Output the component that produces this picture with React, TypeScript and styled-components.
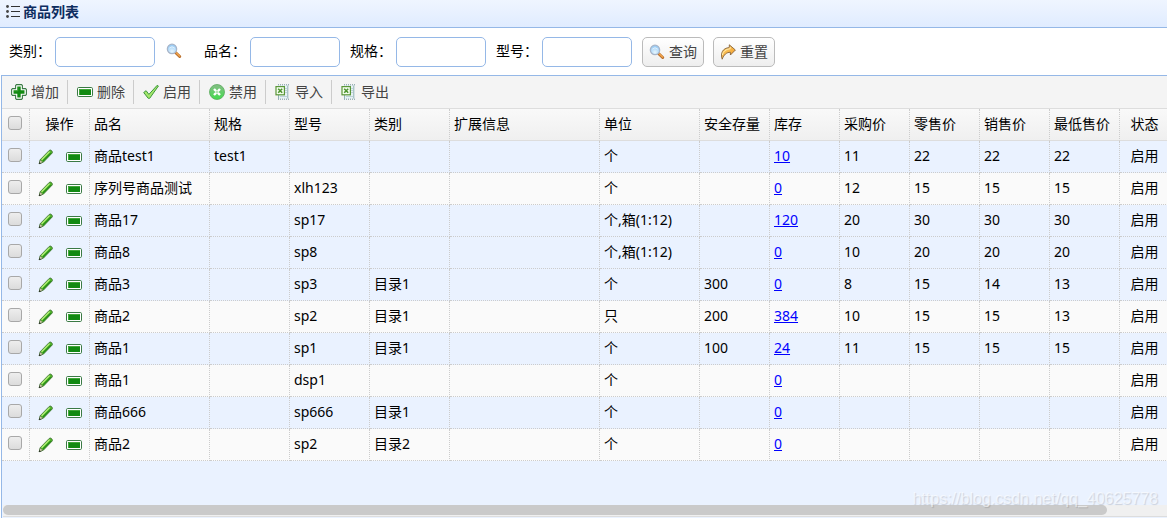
import React from 'react';
import styled, { createGlobalStyle } from 'styled-components';

const GlobalStyle = createGlobalStyle`
  * { box-sizing: border-box; }
  body {
    margin: 0;
    background: #fff;
    color: #000;
    font: 14px/20px "Noto Sans", "Noto Sans CJK SC", sans-serif;
  }
  input, button { font: inherit; }
`;

const Page = styled.div`
  position: relative;
  display: flex;
  flex-direction: column;
  min-height: 100vh;
`;

const TitleBar = styled.header`
  display: flex;
  align-items: center;
  height: 28px;
  padding: 0 5px 4px;
  gap: 2px;
  border-bottom: 1px solid #95b8e7;
  background: linear-gradient(#eff5ff, #e0ecff);
`;

const Title = styled.h1`
  margin: 0;
  color: #0e2d5f;
  font-size: 14px;
  line-height: 20px;
  font-weight: 700;
`;

const SearchForm = styled.form`
  display: flex;
  align-items: center;
  height: 47px;
  padding: 0 9px;
`;

const Field = styled.div<{ $gap?: number }>`
  display: flex;
  align-items: center;
  flex: none;
  margin-right: ${p => p.$gap ?? 10}px;
`;

const Label = styled.label`
  width: 46px;
  padding-bottom: 2px;
  white-space: nowrap;
`;

const TextBox = styled.input<{ $width: number }>`
  width: ${p => p.$width}px;
  height: 30px;
  padding: 4px;
  border: 1px solid #95b8e7;
  border-radius: 5px;
  background: #fff;
  outline: none;
`;

const LookupButton = styled.button`
  display: flex;
  margin-left: 11px;
  padding: 0 0 2px;
  border: 0;
  background: none;
`;

const FormButton = styled.button`
  display: flex;
  align-items: center;
  gap: 4px;
  flex: none;
  height: 30px;
  margin-right: 9px;
  padding: 0 6px;
  border: 1px solid #bbb;
  border-radius: 5px;
  background: linear-gradient(#fff, #eee);
  color: #444;
`;

const Grid = styled.section`
  display: flex;
  flex: 1;
  flex-direction: column;
  margin-left: 1px;
  overflow: hidden;
  border: solid #95b8e7;
  border-width: 1px 0 0 1px;
  background: #eaf2ff;
`;

const Toolbar = styled.div`
  display: flex;
  align-items: center;
  height: 33px;
  border-bottom: 1px solid #ddd;
  background: #f4f4f4;
`;

const ToolButton = styled.button`
  display: flex;
  align-items: center;
  gap: 4px;
  height: 24px;
  width: 65px;
  padding: 0 0 0 9px;
  border: 0;
  background: none;
  color: #444;
  white-space: nowrap;
`;

const Separator = styled.span`
  width: 1px;
  height: 24px;
  background: #ccc;
`;

const TableArea = styled.div`
  flex: 1;
  overflow: hidden;
`;

const Table = styled.table`
  width: 1168px;
  min-width: 100%;
  table-layout: fixed;
  border-collapse: separate;
  border-spacing: 0;
`;

const HeadRow = styled.tr`
  background: linear-gradient(#f9f9f9, #efefef);
`;

const HeadCell = styled.th<{ $center?: boolean }>`
  height: 32px;
  padding: 0 4px 2px;
  border-right: 1px dotted #ccc;
  border-bottom: 1px solid #ddd;
  font-weight: 400;
  text-align: ${p => (p.$center ? 'center' : 'left')};
  white-space: nowrap;
`;

const Row = styled.tr<{ $plain: boolean }>`
  background: ${p => (p.$plain ? '#fafafa' : '#eaf2ff')};
`;

const Cell = styled.td<{ $center?: boolean }>`
  height: 32px;
  padding: 0 4px 2px;
  border-right: 1px dotted #ccc;
  border-bottom: 1px dotted #ccc;
  text-align: ${p => (p.$center ? 'center' : 'left')};
  white-space: nowrap;
`;

const Tick = styled.input`
  appearance: none;
  display: block;
  width: 14px;
  height: 14px;
  margin: 0 0 2px 2px;
  border: 1px solid #a8a8a8;
  border-radius: 3px;
  background: linear-gradient(#eee, #dcdcdc);
`;

const RowActions = styled.div`
  display: flex;
  gap: 12px;
  padding: 2px 0 0 4px;
`;

const IconButton = styled.button`
  display: flex;
  padding: 0;
  border: 0;
  background: none;
`;

const StockLink = styled.a`
  color: #00f;
  text-decoration: underline;
`;

const ScrollTrack = styled.div`
  height: 12px;
  margin-left: 1px;
  margin-bottom: 1px;
  border-bottom: 1px solid #ddd;
  background: #f0f0f0;
`;

const ScrollThumb = styled.div`
  width: calc(95% - 2px);
  height: 10px;
  border-radius: 5px;
  background: #cacaca;
`;

const Watermark = styled.div`
  position: absolute;
  right: 9px;
  bottom: 9px;
  color: rgba(255, 255, 255, 0.6);
  font: 16px/20px "Liberation Sans", sans-serif;
  text-shadow: 1px 1px 1px rgba(0, 0, 0, 0.14);
  pointer-events: none;
`;

const icon = { width: 16, height: 16, viewBox: '0 0 16 16', 'aria-hidden': true };

const ListIcon = () => (
  <svg {...icon}>
    <g fill="#444">
      <circle cx="2.5" cy="2.5" r="1.4" />
      <circle cx="2.5" cy="7.5" r="1.4" />
      <circle cx="2.5" cy="12.5" r="1.4" />
    </g>
    <path d="M6 2.5h9M6 7.5h9M6 12.5h9" stroke="#333" />
  </svg>
);

const SearchIcon = () => (
  <svg {...icon}>
    <defs>
      <radialGradient id="lens" cx=".5" cy=".75" r=".7">
        <stop offset="0" stopColor="#e6f6ff" />
        <stop offset="1" stopColor="#92c8f4" />
      </radialGradient>
    </defs>
    <path d="M9.5 9.5l4.2 4" stroke="#b96f2c" strokeWidth="3" strokeLinecap="round" />
    <path d="M10.5 10l3 2.9" stroke="#f3a64c" strokeWidth="1.4" strokeLinecap="round" />
    <circle cx="6" cy="5.9" r="4.7" fill="url(#lens)" stroke="#a9b5c8" strokeWidth="1.2" />
    <path d="M3.2 5.2Q6 2.2 8.8 5.2" fill="none" stroke="#fff" strokeOpacity=".6" />
  </svg>
);

const ResetIcon = () => (
  <svg {...icon}>
    <defs>
      <linearGradient id="arrow" x1="0" y1="0" x2="1" y2="1">
        <stop offset="0" stopColor="#ffd873" />
        <stop offset="1" stopColor="#f0931d" />
      </linearGradient>
    </defs>
    <path
      d="M9.3.8L15.4 6l-5 5V8.3C6.5 8.3 4 10.5 2.2 15.2.2 9.5 2.5 4 9.3 3.6z"
      fill="url(#arrow)"
      stroke="#86623a"
      strokeWidth=".9"
      strokeLinejoin="round"
    />
    <path d="M2.3 11Q3.5 5.5 10.2 4.7V3" fill="none" stroke="#fff1bd" strokeWidth=".9" />
  </svg>
);

const AddIcon = () => (
  <svg {...icon}>
    <path
      d="M5.5.6h5l.9.9v3.1h3.1l.9.9v5l-.9.9h-3.1v3.1l-.9.9h-5l-.9-.9v-3.1H1.5l-.9-.9v-5l.9-.9h3.1V1.5z"
      fill="#fff"
      stroke="#3b7a45"
      strokeWidth="1.1"
    />
    <path d="M6.3 2.5h3.4v3.8h3.8v3.4H9.7v3.8H6.3V9.7H2.5V6.3h3.8z" fill="#128a12" />
    <path d="M6.8 3v3.8H3" fill="none" stroke="#4fae45" strokeWidth=".8" />
  </svg>
);

const MinusIcon = () => (
  <svg {...icon}>
    <rect x=".5" y="3.5" width="15" height="9" rx="1.2" fill="#fff" stroke="#3b7a45" />
    <path d="M2 5h12v6H2z" fill="#128a12" />
    <path d="M2.5 11V5.5H14" fill="none" stroke="#4fae45" strokeWidth=".8" />
  </svg>
);

const CheckIcon = () => (
  <svg {...icon}>
    <path
      d="M.7 8.5l2.4-1.8 2.8 3.7L14.2 1.3l1.2.7L6.7 14.3H5.2z"
      fill="#a5e66b"
      stroke="#3c983c"
      strokeLinejoin="round"
    />
  </svg>
);

const DisableIcon = () => (
  <svg {...icon}>
    <defs>
      <linearGradient id="disc" x1="0" y1="0" x2="0" y2="1">
        <stop offset="0" stopColor="#86bd86" />
        <stop offset="1" stopColor="#43dc4e" />
      </linearGradient>
    </defs>
    <circle cx="8" cy="8" r="7.5" fill="url(#disc)" stroke="#5aa95d" strokeWidth=".8" />
    <path d="M5 5l6 6M11 5l-6 6" stroke="#fff" strokeWidth="2.4" />
    <path d="M6.5 8h3M8 6.5v3" stroke="#7ccd80" strokeWidth=".7" />
  </svg>
);

const ExcelIcon = () => (
  <svg {...icon}>
    <path d="M3 1h10v14H3z" fill="#e6f1f4" />
    <path d="M3 .8h11M3 15.2h11" stroke="#73939b" strokeDasharray="1 1" />
    <path d="M12.8 1.5v13" stroke="#92b1b6" />
    <path d="M3.5 11v4" stroke="#92b1b6" />
    <path d="M10 4.5h2M10 6.5h2M10 8.5h2M5 12.5h7" stroke="#bed3d8" />
    <rect x="1" y="2.6" width="8.4" height="8.2" fill="#f5fff0" stroke="#5a9638" strokeWidth="1.2" />
    <path d="M3.2 4.7l4 4M7.2 4.7l-4 4" stroke="#4c932e" strokeWidth="1.6" />
  </svg>
);

const PencilIcon = () => (
  <svg {...icon}>
    <path d="M1.2 14.7l1.2-4.2L11.3 1.4q1-.8 2.1.2l.6.6q.8 1 0 2L5.3 13.2z" fill="#59bb2c" stroke="#356b2c" strokeWidth=".9" />
    <path d="M3.6 10.8l8-8.2" stroke="#b6f179" strokeWidth="1.3" />
    <path d="M4.9 12l8-8.2" stroke="#259018" strokeWidth="1.1" />
    <path d="M1.2 14.7l1.1-3.8 2.5 2.4z" fill="#f3e7c7" stroke="#4d6840" strokeWidth=".7" />
    <path d="M1 15l.6-1.9L2.9 14.4z" fill="#222" />
  </svg>
);

const tools = [
  { text: '增加', Icon: AddIcon },
  { text: '删除', Icon: MinusIcon },
  { text: '启用', Icon: CheckIcon },
  { text: '禁用', Icon: DisableIcon },
  { text: '导入', Icon: ExcelIcon },
  { text: '导出', Icon: ExcelIcon },
];

const columns = [
  { text: '品名', width: 120 },
  { text: '规格', width: 80 },
  { text: '型号', width: 80 },
  { text: '类别', width: 80 },
  { text: '扩展信息', width: 150 },
  { text: '单位', width: 100 },
  { text: '安全存量', width: 70 },
  { text: '库存', width: 70 },
  { text: '采购价', width: 70 },
  { text: '零售价', width: 70 },
  { text: '销售价', width: 70 },
  { text: '最低售价', width: 70 },
];

const STOCK_COLUMN = 7;

const products = [
  { cells: ['商品test1', 'test1', '', '', '', '个', '', '10', '11', '22', '22', '22'], plain: false },
  { cells: ['序列号商品测试', '', 'xlh123', '', '', '个', '', '0', '12', '15', '15', '15'], plain: true },
  { cells: ['商品17', '', 'sp17', '', '', '个,箱(1:12)', '', '120', '20', '30', '30', '30'], plain: false },
  { cells: ['商品8', '', 'sp8', '', '', '个,箱(1:12)', '', '0', '10', '20', '20', '20'], plain: false },
  { cells: ['商品3', '', 'sp3', '目录1', '', '个', '300', '0', '8', '15', '14', '13'], plain: false },
  { cells: ['商品2', '', 'sp2', '目录1', '', '只', '200', '384', '10', '15', '15', '13'], plain: true },
  { cells: ['商品1', '', 'sp1', '目录1', '', '个', '100', '24', '11', '15', '15', '15'], plain: false },
  { cells: ['商品1', '', 'dsp1', '', '', '个', '', '0', '', '', '', ''], plain: true },
  { cells: ['商品666', '', 'sp666', '目录1', '', '个', '', '0', '', '', '', ''], plain: false },
  { cells: ['商品2', '', 'sp2', '目录2', '', '个', '', '0', '', '', '', ''], plain: true },
];

export default function App() {
  return (
    <Page>
      <GlobalStyle />
      <TitleBar>
        <ListIcon />
        <Title>商品列表</Title>
      </TitleBar>

      <SearchForm onSubmit={e => e.preventDefault()}>
        <Field $gap={22}>
          <Label htmlFor="category">类别：</Label>
          <TextBox id="category" $width={100} />
          <LookupButton type="button" aria-label="选择类别"><SearchIcon /></LookupButton>
        </Field>
        <Field>
          <Label htmlFor="name">品名：</Label>
          <TextBox id="name" $width={90} />
        </Field>
        <Field>
          <Label htmlFor="spec">规格：</Label>
          <TextBox id="spec" $width={90} />
        </Field>
        <Field>
          <Label htmlFor="model">型号：</Label>
          <TextBox id="model" $width={90} />
        </Field>
        <FormButton type="submit"><SearchIcon />查询</FormButton>
        <FormButton type="reset"><ResetIcon />重置</FormButton>
      </SearchForm>

      <Grid>
        <Toolbar>
          {tools.map(({ text, Icon }, i) => (
            <React.Fragment key={text}>
              {i > 0 && <Separator />}
              <ToolButton type="button"><Icon />{text}</ToolButton>
            </React.Fragment>
          ))}
        </Toolbar>
        <TableArea>
          <Table>
            <colgroup>
              <col width={28} />
              <col width={60} />
              {columns.map(c => <col key={c.text} width={c.width} />)}
              <col width={50} />
            </colgroup>
            <thead>
              <HeadRow>
                <HeadCell><Tick type="checkbox" aria-label="全选" /></HeadCell>
                <HeadCell $center>操作</HeadCell>
                {columns.map(c => <HeadCell key={c.text}>{c.text}</HeadCell>)}
                <HeadCell $center>状态</HeadCell>
              </HeadRow>
            </thead>
            <tbody>
              {products.map(({ cells, plain }, r) => (
                <Row key={r} $plain={plain}>
                  <Cell><Tick type="checkbox" aria-label={cells[0]} /></Cell>
                  <Cell>
                    <RowActions>
                      <IconButton type="button" aria-label="编辑"><PencilIcon /></IconButton>
                      <IconButton type="button" aria-label="删除"><MinusIcon /></IconButton>
                    </RowActions>
                  </Cell>
                  {cells.map((text, i) => (
                    <Cell key={i}>
                      {i === STOCK_COLUMN ? <StockLink href="#">{text}</StockLink> : text}
                    </Cell>
                  ))}
                  <Cell $center>启用</Cell>
                </Row>
              ))}
            </tbody>
          </Table>
        </TableArea>
        <ScrollTrack><ScrollThumb /></ScrollTrack>
      </Grid>
      <Watermark>https://blog.csdn.net/qq_40625778</Watermark>
    </Page>
  );
}
